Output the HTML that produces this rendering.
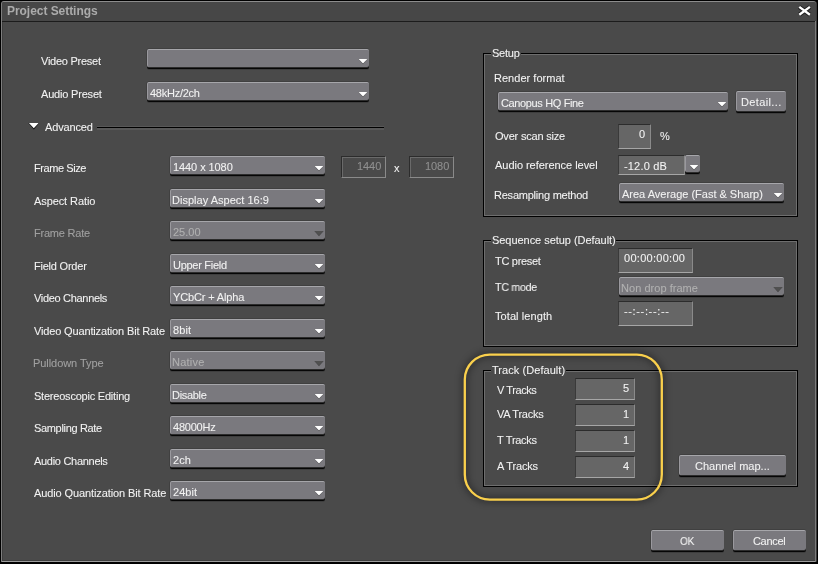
<!DOCTYPE html>
<html><head><meta charset="utf-8"><style>
html,body{margin:0;padding:0;background:#000;width:818px;height:564px;overflow:hidden}
body{position:relative;font-family:"Liberation Sans",sans-serif;font-size:11px}
.t{position:absolute;white-space:nowrap;will-change:transform;-webkit-text-stroke:0.08px currentColor}
.ar{position:absolute}
#dlg{position:absolute;left:1px;top:1px;width:813px;height:559px;background:#4a4a4a;border:1px solid #8c8c8c;border-left-color:#7e7e7e;border-right-color:#7a7a7a;border-bottom-color:#9c9c9c;border-radius:3px 3px 1px 1px;box-shadow:inset 1px 0 0 #3e3e3e,inset 0 -1px 0 #3e3e3e,1px 0 0 #3a3a3a}
#title{position:absolute;left:2px;top:2px;width:814px;height:19px;background:#474747;border-radius:2px 2px 0 0}
#sep{position:absolute;left:2px;top:21px;width:813px;height:1px;background:#1c1c1c}
.dd{position:absolute;box-sizing:border-box;background:#7a797e;border-top:1px solid #a6a6aa;border-left:1px solid #9a999e;border-radius:2px;box-shadow:-1px 0 0 #404040,0 -1px 0 #404040,0 1px 0 #2c2c2c,0 2px 0 #060606,0 3px 0 #3e3e3e}
.ib{position:absolute;border-top:1px solid #2c2c2c;border-left:1px solid #2c2c2c;border-right:1px solid #8a8a8a;border-bottom:1px solid #8a8a8a;box-shadow:inset 1px 1px 0 #6a6a6a}
.tb{position:absolute;background:#666666;border-top:1px solid #2c2c2c;border-left:1px solid #3a3a3a;border-right:1px solid #8a8a8a;border-bottom:1px solid #a6a6a6}
.gb{position:absolute;border:1px solid #000;box-shadow:inset 0 0 0 1px #6e6e6e}
</style></head><body>
<div id="dlg"></div>
<div id="title"></div>
<div id="sep"></div>
<div class="t" style="left:6.70px;top:5px;color:#ababab;font:bold 12px 'Liberation Sans';line-height:13px;letter-spacing:-0.047px;-webkit-text-stroke:0;">Project Settings</div>
<svg style="position:absolute;left:796px;top:3px" width="18" height="16"><path d="M3.3 3.9L13.9 11.7M13.9 3.9L3.3 11.7" stroke="#000" stroke-opacity="0.55" stroke-width="4.3"/><path d="M3.3 3.9L13.9 11.7M13.9 3.9L3.3 11.7" stroke="#fff" stroke-width="2.4"/></svg>
<div class="t" style="left:41.00px;top:55px;color:#f2f2f2;font:11px 'Liberation Sans';line-height:13px;letter-spacing:-0.255px;">Video Preset</div>
<div class="t" style="left:41.00px;top:88px;color:#f2f2f2;font:11px 'Liberation Sans';line-height:13px;letter-spacing:-0.191px;">Audio Preset</div>
<div class="dd" style="left:147px;top:49px;width:222px;height:18px"></div>
<svg class="ar" style="left:358px;top:58px" width="11" height="8"><path d="M0.4 1H9.6L5 6.2Z" fill="#000" fill-opacity="0.45"/><path d="M0.6 1H9.4L5 5.4Z" fill="#ffffff"/></svg>
<div class="dd" style="left:147px;top:82px;width:222px;height:18px"></div>
<svg class="ar" style="left:358px;top:91px" width="11" height="8"><path d="M0.4 1H9.6L5 6.2Z" fill="#000" fill-opacity="0.45"/><path d="M0.6 1H9.4L5 5.4Z" fill="#ffffff"/></svg>
<div class="t" style="left:150.00px;top:87px;color:#f2f2f2;font:11px 'Liberation Sans';line-height:13px;letter-spacing:-0.250px;">48kHz/2ch</div>
<svg style="position:absolute;left:28px;top:122px" width="13" height="9"><path d="M0.3 1H11.3L5.8 7.6Z" fill="#000" fill-opacity="0.85"/><path d="M0.9 1H10.7L5.8 6.3Z" fill="#fff"/></svg>
<div class="t" style="left:45.00px;top:121px;color:#f2f2f2;font:11px 'Liberation Sans';line-height:13px;letter-spacing:-0.143px;">Advanced</div>
<div style="position:absolute;left:97px;top:126px;width:287px;height:1px;background:#585858;border-bottom:1px solid #000;box-shadow:0 2px 0 #585858"></div>
<div class="t" style="left:34.00px;top:162px;color:#f2f2f2;font:11px 'Liberation Sans';line-height:13px;letter-spacing:-0.422px;">Frame Size</div>
<div class="dd" style="left:170px;top:156px;width:155px;height:18px"></div>
<svg class="ar" style="left:314px;top:165px" width="11" height="8"><path d="M0.4 1H9.6L5 6.2Z" fill="#000" fill-opacity="0.45"/><path d="M0.6 1H9.4L5 5.4Z" fill="#ffffff"/></svg>
<div class="t" style="left:172.80px;top:161px;color:#f2f2f2;font:11px 'Liberation Sans';line-height:13px;letter-spacing:-0.080px;">1440 x 1080</div>
<div class="t" style="left:34.00px;top:195px;color:#f2f2f2;font:11px 'Liberation Sans';line-height:13px;letter-spacing:-0.091px;">Aspect Ratio</div>
<div class="dd" style="left:170px;top:189px;width:155px;height:18px"></div>
<svg class="ar" style="left:314px;top:198px" width="11" height="8"><path d="M0.4 1H9.6L5 6.2Z" fill="#000" fill-opacity="0.45"/><path d="M0.6 1H9.4L5 5.4Z" fill="#ffffff"/></svg>
<div class="t" style="left:171.80px;top:194px;color:#f2f2f2;font:11px 'Liberation Sans';line-height:13px;letter-spacing:0.017px;">Display Aspect 16:9</div>
<div class="t" style="left:34.00px;top:227px;color:#a0a0a0;font:11px 'Liberation Sans';line-height:13px;letter-spacing:-0.211px;">Frame Rate</div>
<div class="dd" style="left:170px;top:221px;width:155px;height:18px"></div>
<svg class="ar" style="left:314px;top:230px" width="11" height="8"><path d="M0.4 1H9.6L5 6.2Z" fill="#000" fill-opacity="0.45"/><path d="M0.6 1H9.4L5 5.4Z" fill="#505050"/></svg>
<div class="t" style="left:172.80px;top:226px;color:#b0b0b0;font:11px 'Liberation Sans';line-height:13px;letter-spacing:0.000px;">25.00</div>
<div class="t" style="left:34.00px;top:260px;color:#f2f2f2;font:11px 'Liberation Sans';line-height:13px;letter-spacing:-0.220px;">Field Order</div>
<div class="dd" style="left:170px;top:254px;width:155px;height:18px"></div>
<svg class="ar" style="left:314px;top:263px" width="11" height="8"><path d="M0.4 1H9.6L5 6.2Z" fill="#000" fill-opacity="0.45"/><path d="M0.6 1H9.4L5 5.4Z" fill="#ffffff"/></svg>
<div class="t" style="left:172.80px;top:259px;color:#f2f2f2;font:11px 'Liberation Sans';line-height:13px;letter-spacing:-0.280px;">Upper Field</div>
<div class="t" style="left:34.00px;top:292px;color:#f2f2f2;font:11px 'Liberation Sans';line-height:13px;letter-spacing:-0.315px;">Video Channels</div>
<div class="dd" style="left:170px;top:286px;width:155px;height:18px"></div>
<svg class="ar" style="left:314px;top:295px" width="11" height="8"><path d="M0.4 1H9.6L5 6.2Z" fill="#000" fill-opacity="0.45"/><path d="M0.6 1H9.4L5 5.4Z" fill="#ffffff"/></svg>
<div class="t" style="left:172.80px;top:291px;color:#f2f2f2;font:11px 'Liberation Sans';line-height:13px;letter-spacing:-0.150px;">YCbCr + Alpha</div>
<div class="t" style="left:34.00px;top:325px;color:#f2f2f2;font:11px 'Liberation Sans';line-height:13px;letter-spacing:-0.150px;">Video Quantization Bit Rate</div>
<div class="dd" style="left:170px;top:319px;width:155px;height:18px"></div>
<svg class="ar" style="left:314px;top:328px" width="11" height="8"><path d="M0.4 1H9.6L5 6.2Z" fill="#000" fill-opacity="0.45"/><path d="M0.6 1H9.4L5 5.4Z" fill="#ffffff"/></svg>
<div class="t" style="left:172.80px;top:324px;color:#f2f2f2;font:11px 'Liberation Sans';line-height:13px;letter-spacing:0.100px;">8bit</div>
<div class="t" style="left:33.00px;top:357px;color:#a0a0a0;font:11px 'Liberation Sans';line-height:13px;letter-spacing:-0.058px;">Pulldown Type</div>
<div class="dd" style="left:170px;top:351px;width:155px;height:18px"></div>
<svg class="ar" style="left:314px;top:360px" width="11" height="8"><path d="M0.4 1H9.6L5 6.2Z" fill="#000" fill-opacity="0.45"/><path d="M0.6 1H9.4L5 5.4Z" fill="#505050"/></svg>
<div class="t" style="left:171.80px;top:356px;color:#b0b0b0;font:11px 'Liberation Sans';line-height:13px;letter-spacing:0.240px;">Native</div>
<div class="t" style="left:34.00px;top:390px;color:#f2f2f2;font:11px 'Liberation Sans';line-height:13px;letter-spacing:-0.216px;">Stereoscopic Editing</div>
<div class="dd" style="left:170px;top:384px;width:155px;height:18px"></div>
<svg class="ar" style="left:314px;top:393px" width="11" height="8"><path d="M0.4 1H9.6L5 6.2Z" fill="#000" fill-opacity="0.45"/><path d="M0.6 1H9.4L5 5.4Z" fill="#ffffff"/></svg>
<div class="t" style="left:171.80px;top:389px;color:#f2f2f2;font:11px 'Liberation Sans';line-height:13px;letter-spacing:-0.300px;">Disable</div>
<div class="t" style="left:34.00px;top:422px;color:#f2f2f2;font:11px 'Liberation Sans';line-height:13px;letter-spacing:-0.333px;">Sampling Rate</div>
<div class="dd" style="left:170px;top:416px;width:155px;height:18px"></div>
<svg class="ar" style="left:314px;top:425px" width="11" height="8"><path d="M0.4 1H9.6L5 6.2Z" fill="#000" fill-opacity="0.45"/><path d="M0.6 1H9.4L5 5.4Z" fill="#ffffff"/></svg>
<div class="t" style="left:172.80px;top:421px;color:#f2f2f2;font:11px 'Liberation Sans';line-height:13px;letter-spacing:-0.233px;">48000Hz</div>
<div class="t" style="left:34.00px;top:455px;color:#f2f2f2;font:11px 'Liberation Sans';line-height:13px;letter-spacing:-0.292px;">Audio Channels</div>
<div class="dd" style="left:170px;top:449px;width:155px;height:18px"></div>
<svg class="ar" style="left:314px;top:458px" width="11" height="8"><path d="M0.4 1H9.6L5 6.2Z" fill="#000" fill-opacity="0.45"/><path d="M0.6 1H9.4L5 5.4Z" fill="#ffffff"/></svg>
<div class="t" style="left:172.80px;top:454px;color:#f2f2f2;font:11px 'Liberation Sans';line-height:13px;letter-spacing:0.100px;">2ch</div>
<div class="t" style="left:34.00px;top:487px;color:#f2f2f2;font:11px 'Liberation Sans';line-height:13px;letter-spacing:-0.108px;">Audio Quantization Bit Rate</div>
<div class="dd" style="left:170px;top:481px;width:155px;height:18px"></div>
<svg class="ar" style="left:314px;top:490px" width="11" height="8"><path d="M0.4 1H9.6L5 6.2Z" fill="#000" fill-opacity="0.45"/><path d="M0.6 1H9.4L5 5.4Z" fill="#ffffff"/></svg>
<div class="t" style="left:172.80px;top:486px;color:#f2f2f2;font:11px 'Liberation Sans';line-height:13px;letter-spacing:0.050px;">24bit</div>
<div class="ib" style="left:341px;top:156px;width:43px;height:20px"></div>
<div class="t" style="left:356.50px;top:160px;color:#909090;font:11px 'Liberation Sans';line-height:13px;letter-spacing:-0.067px;">1440</div>
<div class="t" style="left:393.70px;top:162px;color:#f2f2f2;font:11px 'Liberation Sans';line-height:13px;letter-spacing:0.000px;">x</div>
<div class="ib" style="left:409px;top:156px;width:43px;height:20px"></div>
<div class="t" style="left:424.50px;top:160px;color:#909090;font:11px 'Liberation Sans';line-height:13px;letter-spacing:-0.067px;">1080</div>
<div class="gb" style="left:483px;top:53px;width:313px;height:162px"></div>
<div style="position:absolute;left:491px;top:53px;width:30px;height:2px;background:#4a4a4a"></div>
<div class="t" style="left:492.00px;top:47px;color:#f2f2f2;font:11px 'Liberation Sans';line-height:13px;letter-spacing:-0.250px;">Setup</div>
<div class="t" style="left:493.70px;top:72px;color:#f2f2f2;font:11px 'Liberation Sans';line-height:13px;letter-spacing:0.025px;">Render format</div>
<div class="dd" style="left:498px;top:92px;width:230px;height:18px"></div>
<svg class="ar" style="left:717px;top:101px" width="11" height="8"><path d="M0.4 1H9.6L5 6.2Z" fill="#000" fill-opacity="0.45"/><path d="M0.6 1H9.4L5 5.4Z" fill="#ffffff"/></svg>
<div class="t" style="left:500.80px;top:97px;color:#f2f2f2;font:11px 'Liberation Sans';line-height:13px;letter-spacing:-0.364px;">Canopus HQ Fine</div>
<div class="dd" style="left:736px;top:91px;width:50px;height:20px"></div>
<div class="t" style="left:740.60px;top:96px;color:#f2f2f2;font:11px 'Liberation Sans';line-height:13px;letter-spacing:0.362px;">Detail...</div>
<div class="t" style="left:494.60px;top:130px;color:#f2f2f2;font:11px 'Liberation Sans';line-height:13px;letter-spacing:-0.200px;">Over scan size</div>
<div class="tb" style="left:618px;top:124px;width:31px;height:23px"></div>
<div class="t" style="left:639.00px;top:128px;color:#f2f2f2;font:11px 'Liberation Sans';line-height:13px;letter-spacing:0.000px;">0</div>
<div class="t" style="left:660.00px;top:130px;color:#f2f2f2;font:11px 'Liberation Sans';line-height:13px;letter-spacing:0.000px;">%</div>
<div class="t" style="left:495.00px;top:159px;color:#f2f2f2;font:11px 'Liberation Sans';line-height:13px;letter-spacing:-0.035px;">Audio reference level</div>
<div class="tb" style="left:618px;top:155px;width:65px;height:18px"></div>
<div class="dd" style="left:685px;top:155px;width:15px;height:17px;box-shadow:0 -1px 0 #404040,0 1px 0 #2c2c2c,0 2px 0 #060606,0 3px 0 #3e3e3e"></div>
<svg class="ar" style="left:689px;top:164px" width="11" height="8"><path d="M0.4 1H9.6L5 6.2Z" fill="#000" fill-opacity="0.45"/><path d="M0.6 1H9.4L5 5.4Z" fill="#fff"/></svg>
<div class="t" style="left:624.20px;top:160px;color:#f2f2f2;font:11px 'Liberation Sans';line-height:13px;letter-spacing:0.171px;">-12.0 dB</div>
<div class="t" style="left:493.60px;top:189px;color:#f2f2f2;font:11px 'Liberation Sans';line-height:13px;letter-spacing:-0.225px;">Resampling method</div>
<div class="dd" style="left:619px;top:183px;width:165px;height:18px"></div>
<svg class="ar" style="left:773px;top:192px" width="11" height="8"><path d="M0.4 1H9.6L5 6.2Z" fill="#000" fill-opacity="0.45"/><path d="M0.6 1H9.4L5 5.4Z" fill="#ffffff"/></svg>
<div class="t" style="left:621.80px;top:188px;color:#f2f2f2;font:11px 'Liberation Sans';line-height:13px;letter-spacing:-0.008px;">Area Average (Fast &amp; Sharp)</div>
<div class="gb" style="left:483px;top:240px;width:313px;height:105px"></div>
<div style="position:absolute;left:491px;top:240px;width:125px;height:2px;background:#4a4a4a"></div>
<div class="t" style="left:491.70px;top:234px;color:#f2f2f2;font:11px 'Liberation Sans';line-height:13px;letter-spacing:-0.043px;">Sequence setup (Default)</div>
<div class="t" style="left:495.30px;top:255px;color:#f2f2f2;font:11px 'Liberation Sans';line-height:13px;letter-spacing:-0.300px;">TC preset</div>
<div class="tb" style="left:618px;top:248px;width:73px;height:23px"></div>
<div class="t" style="left:623.60px;top:252px;color:#f2f2f2;font:11px 'Liberation Sans';line-height:13px;letter-spacing:0.280px;">00:00:00:00</div>
<div class="t" style="left:495.30px;top:281px;color:#f2f2f2;font:11px 'Liberation Sans';line-height:13px;letter-spacing:-0.300px;transform:scaleX(0.9716);transform-origin:0px 0;">TC mode</div>
<div class="dd" style="left:619px;top:277px;width:165px;height:18px"></div>
<svg class="ar" style="left:773px;top:286px" width="11" height="8"><path d="M0.4 1H9.6L5 6.2Z" fill="#000" fill-opacity="0.45"/><path d="M0.6 1H9.4L5 5.4Z" fill="#505050"/></svg>
<div class="t" style="left:620.80px;top:282px;color:#b0b0b0;font:11px 'Liberation Sans';line-height:13px;letter-spacing:0.038px;">Non drop frame</div>
<div class="t" style="left:495.30px;top:310px;color:#f2f2f2;font:11px 'Liberation Sans';line-height:13px;letter-spacing:0.082px;">Total length</div>
<div class="tb" style="left:618px;top:301px;width:73px;height:23px"></div>
<div class="t" style="left:623.60px;top:305px;color:#f2f2f2;font:11px 'Liberation Sans';line-height:13px;letter-spacing:0.640px;">--:--:--:--</div>
<div class="gb" style="left:483px;top:370px;width:313px;height:115px"></div>
<div style="position:absolute;left:491px;top:370px;width:75px;height:2px;background:#4a4a4a"></div>
<div class="t" style="left:491.90px;top:364px;color:#f2f2f2;font:11px 'Liberation Sans';line-height:13px;letter-spacing:0.057px;">Track (Default)</div>
<div class="t" style="left:497.00px;top:384px;color:#f2f2f2;font:11px 'Liberation Sans';line-height:13px;letter-spacing:-0.429px;">V Tracks</div>
<div class="tb" style="left:575px;top:378px;width:58px;height:20px"></div>
<div class="t" style="left:622.80px;top:382px;color:#f2f2f2;font:11px 'Liberation Sans';line-height:13px;letter-spacing:0.000px;">5</div>
<div class="t" style="left:497.00px;top:408px;color:#f2f2f2;font:11px 'Liberation Sans';line-height:13px;letter-spacing:-0.250px;">VA Tracks</div>
<div class="tb" style="left:575px;top:404px;width:58px;height:20px"></div>
<div class="t" style="left:622.80px;top:408px;color:#f2f2f2;font:11px 'Liberation Sans';line-height:13px;letter-spacing:0.000px;">1</div>
<div class="t" style="left:497.00px;top:434px;color:#f2f2f2;font:11px 'Liberation Sans';line-height:13px;letter-spacing:-0.271px;">T Tracks</div>
<div class="tb" style="left:575px;top:430px;width:58px;height:20px"></div>
<div class="t" style="left:622.80px;top:434px;color:#f2f2f2;font:11px 'Liberation Sans';line-height:13px;letter-spacing:0.000px;">1</div>
<div class="t" style="left:497.00px;top:460px;color:#f2f2f2;font:11px 'Liberation Sans';line-height:13px;letter-spacing:-0.157px;">A Tracks</div>
<div class="tb" style="left:575px;top:456px;width:58px;height:20px"></div>
<div class="t" style="left:622.80px;top:460px;color:#f2f2f2;font:11px 'Liberation Sans';line-height:13px;letter-spacing:0.000px;">4</div>
<div class="dd" style="left:679px;top:455px;width:107px;height:20px"></div>
<div class="t" style="left:695.40px;top:460px;color:#f2f2f2;font:11px 'Liberation Sans';line-height:13px;letter-spacing:0.015px;">Channel map...</div>
<svg style="position:absolute;left:0;top:0" width="818" height="564"><defs><filter id="bl" x="-20%" y="-20%" width="140%" height="140%"><feGaussianBlur stdDeviation="3"/></filter></defs><rect x="464.8" y="354.6" width="197" height="145" rx="25" fill="none" stroke="#000" stroke-opacity="0.3" stroke-width="7" filter="url(#bl)"/><rect x="464.8" y="354.6" width="197" height="145" rx="25" fill="none" stroke="#fad04c" stroke-width="2.3"/></svg>
<div class="dd" style="left:651px;top:530px;width:73px;height:20px"></div>
<div class="t" style="left:679.70px;top:535px;color:#f2f2f2;font:11px 'Liberation Sans';line-height:13px;letter-spacing:-0.300px;transform:scaleX(0.9184);transform-origin:0px 0;">OK</div>
<div class="dd" style="left:733px;top:530px;width:73px;height:20px"></div>
<div class="t" style="left:752.90px;top:535px;color:#f2f2f2;font:11px 'Liberation Sans';line-height:13px;letter-spacing:-0.320px;">Cancel</div>
</body></html>
